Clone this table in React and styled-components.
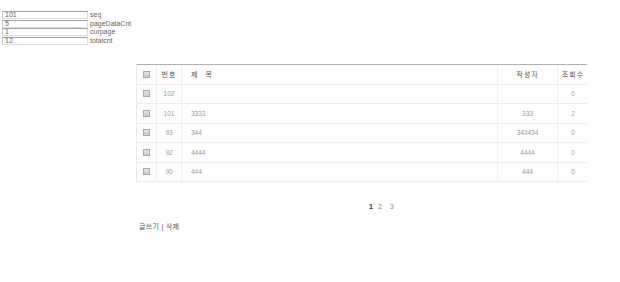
import React from 'react';
import styled, { createGlobalStyle } from 'styled-components';

const GlobalStyle = createGlobalStyle`
    body {
        margin: 0;
        background: #fff;
        font-family: "Liberation Sans", "Noto Sans CJK KR", sans-serif;
        font-size: 7px;
        color: #666;
    }
`;

const Page = styled.div`
    padding: 11px 0 0 2px;
`;

const ParamList = styled.div`
    display: grid;
    grid-template-columns: 86px auto;
    grid-auto-rows: 8.5px;
    align-items: center;
    width: 140px;
`;

const ParamInput = styled.div`
    box-sizing: border-box;
    height: 8px;
    border: 1px solid #dcdcdc;
    border-top-color: #a0a0a0;
    border-left-color: #c4c4c4;
    padding: 0 2px;
    line-height: 6px;
    font-size: 7px;
    color: #666;
    background: #fff;
`;

const ParamLabel = styled.span`
    padding-left: 2px;
    line-height: 8px;
    font-size: 7px;
    color: #666;
`;

const Board = styled.div`
    margin: 19px 0 0 134px;
    width: 451px;
`;

const Table = styled.div`
    border-top: 1px solid #b0b0b0;
    border-left: 1px solid #eaeaea;
`;

const Row = styled.div`
    display: grid;
    grid-template-columns: 20px 25px 316px 60px 30px;
    height: 19.5px;
    border-bottom: 1px solid #ececec;
    box-sizing: border-box;
    color: ${p => (p.$head ? '#555' : '#999')};
    font-size: ${p => (p.$head ? '7px' : '6.5px')};
`;

const Cell = styled.div`
    display: flex;
    align-items: center;
    justify-content: ${p => p.$align || 'center'};
    padding-left: ${p => (p.$align === 'flex-start' ? '9px' : '0')};
    border-right: ${p => (p.$line ? '1px solid #f0f0f0' : 'none')};
    letter-spacing: ${p => p.$spaced || 'normal'};
    white-space: nowrap;
`;

const Check = styled.span`
    display: inline-block;
    box-sizing: border-box;
    width: 7px;
    height: 7px;
    border: 1px solid #a9a9a9;
    background: linear-gradient(#e4e4e4, #cbcbcb);
`;

const Pager = styled.div`
    display: flex;
    gap: 5px;
    padding: 21px 0 0 233px;
    font-size: 7px;
    color: #888;
`;

const PageNum = styled.span`
    font-weight: ${p => (p.$current ? 'bold' : 'normal')};
    color: ${p => (p.$current ? '#333' : '#888')};
    margin-left: ${p => (p.$wide ? '3px' : '0')};
`;

const Actions = styled.div`
    padding: 11px 0 0 3px;
    font-size: 7px;
    color: #555;
    letter-spacing: 0.3px;
`;

const params = [
    ['101', 'seq'],
    ['5', 'pageDataCnt'],
    ['1', 'curpage'],
    ['12', 'totalcnt'],
];

const posts = [
    { no: 102, title: '', writer: '', hits: 0 },
    { no: 101, title: '3333', writer: '333', hits: 2 },
    { no: 93, title: '344', writer: '343434', hits: 0 },
    { no: 92, title: '4444', writer: '4444', hits: 0 },
    { no: 90, title: '444', writer: '444', hits: 0 },
];

export default function App() {
    return (
        <Page>
            <GlobalStyle />
            <ParamList>
                {params.map(([value, name]) => (
                    <React.Fragment key={name}>
                        <ParamInput>{value}</ParamInput>
                        <ParamLabel>{name}</ParamLabel>
                    </React.Fragment>
                ))}
            </ParamList>

            <Board>
                <Table>
                    <Row $head>
                        <Cell $line><Check /></Cell>
                        <Cell $line $spaced="1px">번호</Cell>
                        <Cell $line $align="flex-start" $spaced="3px">제 목</Cell>
                        <Cell $line $spaced="1px">작성자</Cell>
                        <Cell $spaced="1px">조회수</Cell>
                    </Row>
                    {posts.map(post => (
                        <Row key={post.no}>
                            <Cell $line><Check /></Cell>
                            <Cell $line>{post.no}</Cell>
                            <Cell $line $align="flex-start">{post.title}</Cell>
                            <Cell $line>{post.writer}</Cell>
                            <Cell>{post.hits}</Cell>
                        </Row>
                    ))}
                </Table>

                <Pager>
                    <PageNum $current>1</PageNum>
                    <PageNum>2</PageNum>
                    <PageNum $wide>3</PageNum>
                </Pager>

                <Actions>글쓰기 | 삭제</Actions>
            </Board>
        </Page>
    );
}
